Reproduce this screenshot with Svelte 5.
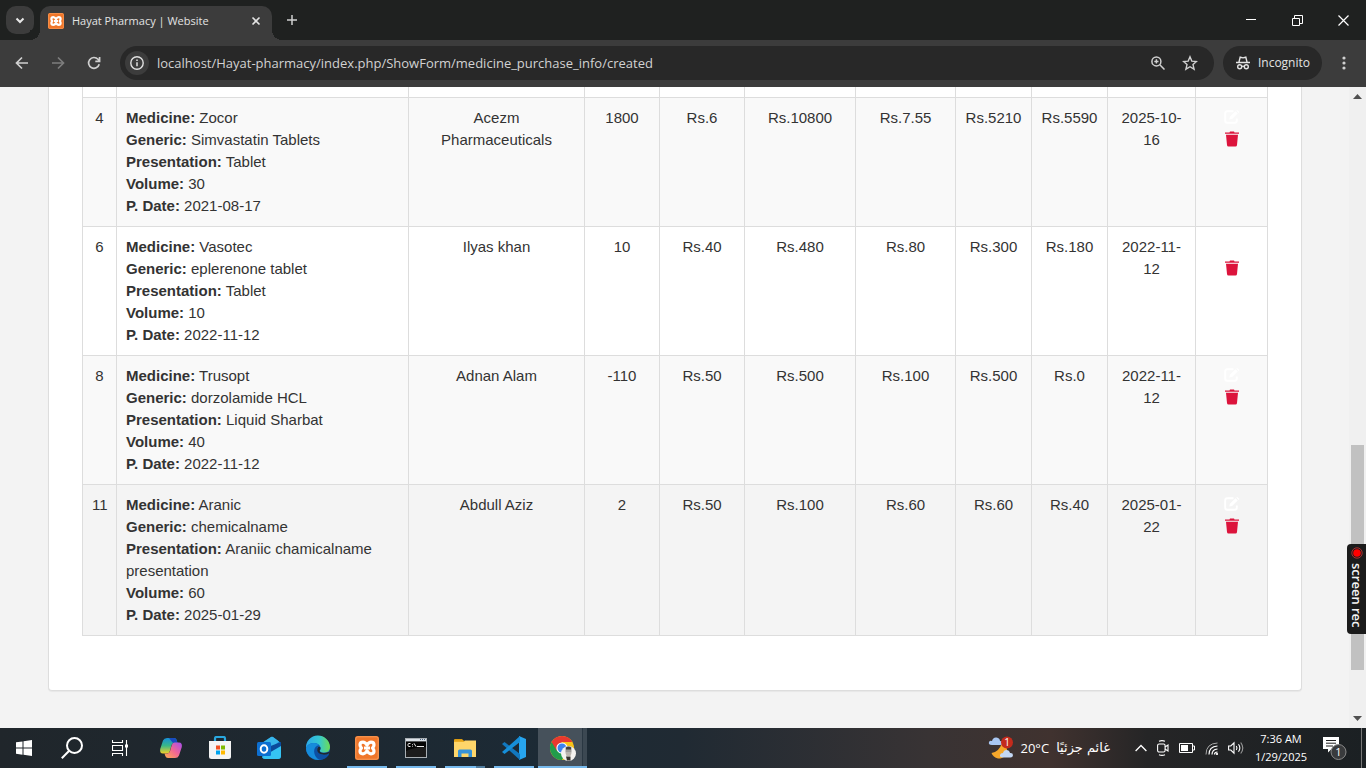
<script>
  const columns = [34, 0, 176, 75, 85, 111, 100, 76, 76, 88, 72];

  const rows = [
    { id: 4, name: 'Zocor', generic: 'Simvastatin Tablets', form: 'Tablet', volume: 30, bought: '2021-08-17', supplier: 'Acezm Pharmaceuticals', cells: ['1800', 'Rs.6', 'Rs.10800', 'Rs.7.55', 'Rs.5210', 'Rs.5590', '2025-10-16'], tone: 'odd' },
    { id: 6, name: 'Vasotec', generic: 'eplerenone tablet', form: 'Tablet', volume: 10, bought: '2022-11-12', supplier: 'Ilyas khan', cells: ['10', 'Rs.40', 'Rs.480', 'Rs.80', 'Rs.300', 'Rs.180', '2022-11-12'], tone: 'even' },
    { id: 8, name: 'Trusopt', generic: 'dorzolamide HCL', form: 'Liquid Sharbat', volume: 40, bought: '2022-11-12', supplier: 'Adnan Alam', cells: ['-110', 'Rs.50', 'Rs.500', 'Rs.100', 'Rs.500', 'Rs.0', '2022-11-12'], tone: 'odd' },
    { id: 11, name: 'Aranic', generic: 'chemicalname', form: 'Araniic chamicalname presentation', volume: 60, bought: '2025-01-29', supplier: 'Abdull Aziz', cells: ['2', 'Rs.50', 'Rs.100', 'Rs.60', 'Rs.60', 'Rs.40', '2025-01-22'], tone: 'active' }
  ];
</script>

{#snippet xampp(size)}
  <svg width={size} height={size} viewBox="0 0 24 24" aria-hidden="true">
    <rect width="24" height="24" rx="2.5" fill="#f0762a" />
    <rect x=".8" y=".8" width="22.4" height="22.4" rx="2" fill="none" stroke="#f9a566" stroke-width=".8" />
    <path d="M12 9.200C10.800 7.200 9.800 6.200 8 6.200 6 6.200 5 7.400 5 9c0 1.300.7 2 1.500 3C5.700 13 5 13.700 5 15c0 1.600 1 2.800 3 2.800 1.800 0 2.800-1 4-3 1.200 2 2.200 3 4 3 2 0 3-1.200 3-2.800 0-1.300-.7-2-1.500-3 .8-1 1.500-1.700 1.500-3 0-1.600-1-2.800-3-2.800-1.800 0-2.800 1-4 3z" fill="none" stroke="#fff" stroke-width="3.200" stroke-linejoin="round" />
    <path d="M9 12h6" stroke="#fff" stroke-width="3" />
  </svg>
{/snippet}

<div class="screen">
  <header class="tabs">
    <button class="tabsearch" aria-label="Search tabs">
      <svg width="10" height="7" viewBox="0 0 10 7"><path d="M1.500 1.500 5 5l3.500-3.500" fill="none" stroke="#e8e8e8" stroke-width="2" /></svg>
    </button>
    <div class="tab">
      {@render xampp(16)}
      <span class="title">Hayat Pharmacy | Website</span>
      <button class="plain" aria-label="Close tab">
        <svg width="10" height="10" viewBox="0 0 10 10"><path d="m1.500 1.500 7 7m0-7-7 7" stroke="#e3e3e3" stroke-width="1.600" /></svg>
      </button>
    </div>
    <button class="plain newtab" aria-label="New tab">
      <svg width="12" height="12" viewBox="0 0 12 12"><path d="M6 1v10M1 6h10" stroke="#d0d0d0" stroke-width="1.500" /></svg>
    </button>
    <div class="window">
      <button class="plain" aria-label="Minimize"><svg width="10" height="10"><path d="M0 4.500h10" stroke="#fff" /></svg></button>
      <button class="plain" aria-label="Restore"><svg width="11" height="11"><path d="M.5 3.500h7v7h-7zM2.500 3V.5h8v8H8" fill="none" stroke="#fff" /></svg></button>
      <button class="plain" aria-label="Close"><svg width="11" height="11"><path d="m.5.5 10 10m0-10-10 10" stroke="#fff" stroke-width="1.200" /></svg></button>
    </div>
  </header>

  <nav class="toolbar">
    <button class="plain" aria-label="Back"><svg width="14" height="14" viewBox="0 0 14 14"><path d="M13 7H2M7 1.500 1.500 7 7 12.500" fill="none" stroke="#d0d0d0" stroke-width="1.700" /></svg></button>
    <button class="plain" aria-label="Forward"><svg width="14" height="14" viewBox="0 0 14 14"><path d="M1 7h11M7 1.500 12.500 7 7 12.500" fill="none" stroke="#7d7d7d" stroke-width="1.700" /></svg></button>
    <button class="plain" aria-label="Reload"><svg width="14" height="14" viewBox="0 0 14 14"><path d="M12.200 8.300A5.400 5.400 0 1 1 11 3.300l1.500 1.600M12.600 1v4.300H8.300" fill="none" stroke="#d0d0d0" stroke-width="1.700" /></svg></button>
    <div class="address">
      <button class="plain info" aria-label="Site information"><svg width="14" height="14" viewBox="0 0 14 14"><circle cx="7" cy="7" r="6.200" fill="none" stroke="#e0e0e0" stroke-width="1.400" /><path d="M7 6.300v4M7 3.500V5" stroke="#e0e0e0" stroke-width="1.500" /></svg></button>
      <input aria-label="Address" value="localhost/Hayat-pharmacy/index.php/ShowForm/medicine_purchase_info/created" />
      <button class="plain" aria-label="Zoom"><svg width="14" height="14" viewBox="0 0 14 14"><circle cx="5.400" cy="5.400" r="4.500" fill="none" stroke="#d0d0d0" stroke-width="1.500" /><path d="m8.800 8.800 4.700 4.700M5.400 3.300v4.200M3.300 5.400h4.200" stroke="#d0d0d0" stroke-width="1.500" /></svg></button>
      <button class="plain" aria-label="Bookmark"><svg width="16" height="16" viewBox="0 0 16 16"><path d="m8 1.800 1.800 4.300 4.700.4L11 9.600l1.100 4.600L8 11.700l-4.100 2.500L5 9.600 1.500 6.500l4.700-.4z" fill="none" stroke="#d0d0d0" stroke-width="1.400" /></svg></button>
    </div>
    <div class="incognito">
      <svg width="14" height="14" viewBox="0 0 14 14" fill="none" stroke="#e3e3e3" stroke-width="1.400"><path d="M0 6.500h14M3 6 4.200 1.200l2.800.7 2.800-.7L11 6" /><circle cx="3.700" cy="10.800" r="2" /><circle cx="10.300" cy="10.800" r="2" /><path d="M5.700 10.500q1.300-.8 2.600 0" /></svg>
      <span>Incognito</span>
    </div>
    <button class="plain dots" aria-label="Menu"><svg width="4" height="14" viewBox="0 0 4 14" fill="#d0d0d0"><circle cx="2" cy="2" r="1.600" /><circle cx="2" cy="7" r="1.600" /><circle cx="2" cy="12" r="1.600" /></svg></button>
  </nav>

  <div class="view">
    <main>
      <section class="panel">
        <table>
          <colgroup>
            {#each columns as width}
              <col style:width={width ? `${width}px` : 'auto'} />
            {/each}
          </colgroup>
          <tbody>
            <tr class="cut">
              {#each columns as _}<td></td>{/each}
            </tr>
            {#each rows as row}
              <tr class={row.tone}>
                <td>{row.id}</td>
                <td class="details">
                  <b>Medicine:</b> {row.name}<br />
                  <b>Generic:</b> {row.generic}<br />
                  <b>Presentation:</b> {row.form}<br />
                  <b>Volume:</b> {row.volume}<br />
                  <b>P. Date:</b> {row.bought}
                </td>
                <td>{row.supplier}</td>
                {#each row.cells as cell}<td>{cell}</td>{/each}
                <td>
                  <a href="#edit-{row.id}" aria-label="Edit"><svg width="16" height="14" viewBox="0 0 16 14"><path d="M9.500 1.200H3.200Q1.200 1.200 1.200 3.200v7.600q0 2 2 2h7.600q2 0 2-2V8.500" fill="none" stroke="#fff" stroke-width="1.900" /><path d="m5.300 9.400.6-2.600 5.600-5.500 2.200 2.200-5.600 5.500zM12.300.6l.8-.6L15.500 2l-.9.900z" fill="#fff" /></svg></a>
                  <a href="#delete-{row.id}" aria-label="Delete"><svg width="14" height="16" viewBox="0 0 14 16" fill="#dc143c"><path d="M4.500 1.500 5 .5h4l.5 1H14v1.300H0V1.500zM1 3.800h12L12 14q-.1 1.500-1.500 1.500h-7Q2.100 15.500 2 14z" /></svg></a>
                </td>
              </tr>
            {/each}
          </tbody>
        </table>
      </section>
    </main>
    <div class="scroll">
      <svg width="9" height="5"><path d="M0 5 4.500 0 9 5z" fill="#505050" /></svg>
      <div class="track"><div class="thumb"></div></div>
      <svg width="9" height="5"><path d="m0 0 4.500 5L9 0z" fill="#505050" /></svg>
    </div>
    <div class="recorder">
      <svg width="12" height="12" viewBox="0 0 12 12"><circle cx="6" cy="6" r="5.200" fill="none" stroke="#c33" stroke-width=".8" /><circle cx="6" cy="6" r="3.800" fill="#f00" /></svg>
      <span>screen rec</span>
    </div>
  </div>

  <footer class="taskbar">
    <button aria-label="Start"><svg width="16" height="16" viewBox="0 0 16 16" fill="#fff"><path d="M0 2.300 6.500 1.400v6.200H0zM7.500 1.200 16 0v7.600H7.500zM0 8.500h6.500v6.200L0 13.800zM7.500 8.500H16V16l-8.500-1.200z" /></svg></button>
    <button aria-label="Search"><svg width="22" height="22" viewBox="0 0 22 22" fill="none" stroke="#fff" stroke-width="2"><circle cx="13.500" cy="8.500" r="7.500" /><path d="m8.200 13.800-7.400 7.400" /></svg></button>
    <button aria-label="Task view"><svg width="16" height="16" viewBox="0 0 16 16"><path d="M.5 0v2.500h10V0M.5 5.500h10v5H.5zM.5 16v-2.500h10V16M14.500 0v16" fill="none" stroke="#fff" stroke-width="1.100" /><path d="M13 4.500h3v3h-3z" fill="#fff" /></svg></button>
    <div class="apps">
      <button aria-label="Copilot"><svg width="24" height="24" viewBox="0 0 24 24">
        <defs>
          <linearGradient id="cpa" x1="0" y1="0" x2="0" y2="1"><stop offset="0" stop-color="#168fd8" /><stop offset=".5" stop-color="#39b886" /><stop offset="1" stop-color="#f3d128" /></linearGradient>
          <linearGradient id="cpb" x1="1" y1="0" x2="0" y2="1"><stop offset="0" stop-color="#a64df0" /><stop offset=".5" stop-color="#f26693" /><stop offset="1" stop-color="#ffb04c" /></linearGradient>
        </defs>
        <path d="M8 2h7q2 0 2.700 2l.8 3h-3.200q-2 0-2.700 2l-1.900 6.500Q10 17.500 8 17.500H4Q.5 17.500 1.200 13L4 4.500Q5 2 8 2z" fill="url(#cpa)" />
        <path d="M10 2h5q2 0 2.700 2l.8 3h-3q-2 0-2.800-1.600z" fill="#184bc0" />
        <path d="M16 22H9q-2 0-2.700-2l-.8-2.500h2.700q2 0 2.700-2L12.800 9q.7-2.500 2.700-2.500h4.500q3.500 0 2.800 4.500L20 19.500Q19 22 16 22z" fill="url(#cpb)" />
      </svg></button>
      <button aria-label="Store"><svg width="24" height="24" viewBox="0 0 24 24">
        <path d="M7 6V2.500Q7 1 8.500 1h7Q17 1 17 2.500V6" fill="none" stroke="#29a8e0" stroke-width="2.200" /><path d="M1 5h22v15.500Q23 23 20.500 23h-17Q1 23 1 20.500z" fill="#f4f4f4" />
        <path d="M8 9.500h4v4H8z" fill="#f25022" /><path d="M13 9.500h4v4h-4z" fill="#7fba00" /><path d="M8 14.500h4v4H8z" fill="#00a4ef" /><path d="M13 14.500h4v4h-4z" fill="#ffb900" />
      </svg></button>
      <button aria-label="Outlook"><svg width="26" height="24" viewBox="0 0 26 24">
        <path d="M6 7 15 1q1-.6 2 0l8 6v13q0 3-3 3H9q-3 0-3-3z" fill="#1685d2" /><path d="m6 7 9-6q1-.6 2 0l6 4.500L12 15z" fill="#38b6eb" /><path d="m12 11 13-5v5l-12 9z" fill="#0b4a9b" /><path d="M25 10v10q0 3-3 3H9q-2 0-3-2z" fill="#35c3f3" />
        <rect x="1" y="6" width="14" height="14" rx="1.500" fill="#0d6fd1" /><ellipse cx="8" cy="13" rx="3.300" ry="3.700" fill="none" stroke="#fff" stroke-width="2" />
      </svg></button>
      <button aria-label="Edge"><svg width="26" height="26" viewBox="0 0 26 26">
        <defs><linearGradient id="eda" x1="0" x2="1"><stop offset="0" stop-color="#2ca9e9" /><stop offset=".55" stop-color="#35c8d2" /><stop offset="1" stop-color="#6ddc54" /></linearGradient></defs>
        <circle cx="13" cy="13" r="12" fill="#1268bd" /><path d="M1 13a12 12 0 0 1 24-1q0 5.500-6 5.500-4 0-4.300-1.800.9-1 .9-3Q14.500 8 9 8 3 8 1 13z" fill="url(#eda)" /><path d="M1 13q2.500-5 8-5 3 0 4.700 2-4.400 1-4.400 6 .5 6 7 9-6 .5-10.300-2.500Q1 19 1 13z" fill="#168cdb" />
        <path d="M14.500 10.500q-3 1.500-2.300 4.500 1.600 5.200 8 5 2-.2 3.500-1.300.7.500-.5 2-3.700 4.600-9 4-4.900-2.500-5-8.500.3-5 5.300-5.700z" fill="#0d50a3" /><path d="M15.600 13q-.3 2-1 2.700.9 2.800 6.300 2.100l3.700-1-1 1.700q-1.700 1.300-4.700 1.200-5.800-.5-6.700-4.200-.3-2.500 1.500-4 1.700.3 1.900 1.500z" fill="#202831" />
      </svg></button>
      <button class="open" aria-label="XAMPP">{@render xampp(24)}</button>
      <button class="open" aria-label="Command Prompt"><svg width="22" height="20" viewBox="0 0 22 20"><rect width="22" height="20" fill="#a9afb4" /><path d="M1 3.500h20V19H1z" fill="#050505" /><path d="M1 1h20v2H1z" fill="#dce2e8" /><path d="M15 1.500h1m1 0h1m1 0h1" stroke="#4f6680" /><path d="M5.500 5.500H4q-1 0-1 1v1q0 1 1 1h1.500M7.500 6v.8m0 1v.8M9 5.300l2 3.300M12 8.500h7" fill="none" stroke="#e8e8e8" stroke-width="1" /><path d="m1 19 0-6Q10 9 21 9v10z" fill="#333" opacity=".5" /></svg></button>
      <button class="open grouped" aria-label="File Explorer"><svg width="22" height="20" viewBox="0 0 22 20"><path d="M0 2Q0 1 1 1h7l2 2H0z" fill="#dc9b10" /><path d="M0 3.500h9l2-1h11V19H0z" fill="#ffd66a" /><path d="M0 2.500h9L11 4H0z" fill="#edae24" /><path d="M4 19v-6q0-1.500 1.500-1.500h11Q18 11.500 18 13v6h-3.500v-3.500h-7V19z" fill="#3793d8" /></svg></button>
      <button class="open" aria-label="Visual Studio Code"><svg width="24" height="24" viewBox="0 0 24 24"><path d="M17 0 24 3v18l-7 3z" fill="#27a5ef" /><path d="m0 8 2.500-2L18 18v6z" fill="#1277bd" /><path d="m0 16 2.500 2L18 6V0z" fill="#168fd9" /></svg></button>
      <button class="open current" aria-label="Chrome"><svg width="28" height="26" viewBox="0 0 28 26">
        <circle cx="13" cy="13" r="12" fill="#fbc318" /><path d="M2.600 7A12 12 0 0 0 13 25l5-9-5-3z" fill="#219c4b" /><path d="M2.600 7 8 16l5-9h10.400A12 12 0 0 0 2.600 7z" fill="#e8382f" /><circle cx="13" cy="13" r="5.600" fill="#fff" /><circle cx="13" cy="13" r="4.500" fill="#3d82ee" />
        <circle cx="19.500" cy="18.500" r="7.500" fill="#f4f2ef" /><path d="M16.500 11.700h6v6h-6z" fill="#9c9a97" /><path d="M17 12.500q2.500-2 5 0v2h-5z" fill="#443f3c" /><path d="M16.500 18h6l-1 3h-4z" fill="#bbb6ad" /><path d="M17 21.500h4.500v4H18z" fill="#37332f" />
      </svg></button>
    </div>
    <div class="tray">
      <button class="weather">
        <svg width="26" height="24" viewBox="0 0 26 24">
          <path d="M14 7a8 8 0 1 1-10.500 10Q11 16 14 7z" fill="#f6a72b" /><path d="M4 9Q0 9 1 6q1-2 3-1 1-4 4.500-3.500T12 5q3 0 2.500 2.500Q14 9 12 9z" fill="#a9c7f2" /><path d="M15 21.500q-3.500 0-3-2.500.5-2 3-2 .7-3 3.500-3t3.500 3q3-.3 3 2.300-.2 2.200-2.500 2.200z" fill="#c4d8f5" />
          <circle cx="19" cy="6.500" r="6" fill="#c42b1c" /><text x="19" y="10" text-anchor="middle" fill="#fff" font-size="10">1</text>
        </svg>
        <span>20°C</span><span dir="rtl" lang="ar" class="arabic">غائم جزئيًا</span>
      </button>
      <div class="status">
        <svg width="12" height="8" viewBox="0 0 12 8"><path d="m.6 7 5.400-5.500L11.400 7" fill="none" stroke="#fff" stroke-width="1.300" /></svg>
        <svg width="12" height="16" viewBox="0 0 12 16" fill="none" stroke="#fff" stroke-width="1.100"><rect x=".6" y="4" width="7.500" height="8" rx="1.500" /><path d="m8 7 3-2v6L8 9M2 1.200q3-1.200 6 0M2 14.800q3 1.200 6 0" /></svg>
        <svg width="16" height="10" viewBox="0 0 16 10"><path d="M.5.5h13v9H.5zM14 3h1.500v4H14" fill="none" stroke="#fff" /><path d="M2 2h7v6H2z" fill="#fff" /></svg>
        <svg width="13" height="13" viewBox="0 0 13 13" fill="none" stroke="#fff"><path d="M1 12.500Q1 1.500 12.500 1" stroke="#aaa" /><path d="M4 12.500Q4 4.500 12.500 4M7 12.500Q7 7.500 12.500 7M9.500 12.500q0-2.500 3-2.500" stroke-width="1.200" /><circle cx="12" cy="12" r=".8" fill="#fff" /></svg>
        <svg width="16" height="14" viewBox="0 0 16 14" fill="none" stroke="#fff" stroke-width="1.100"><path d="M.6 5h2.200L6 1.800v10.400L2.800 9H.6zM8.300 5q1.400 2 0 4M10.500 3.300q2.700 3.700 0 7.400" /><path d="M12.700 1.500q4.200 5.500 0 11" stroke="#999" /></svg>
      </div>
      <time><span>7:36 AM</span><span>1/29/2025</span></time>
      <button class="note" aria-label="Notifications">
        <svg width="26" height="24" viewBox="0 0 26 24"><path d="M1 1h16v12H9.500L6 16.500V13H1z" fill="#fff" /><path d="M4 4.500h10M4 7.200h10M4 10h7" stroke="#222" /><circle cx="16.500" cy="16" r="7.500" fill="#393b3d" stroke="#8a8a8a" /><text x="16.500" y="20" text-anchor="middle" fill="#fff" font-size="11">1</text></svg>
      </button>
      <button class="desktop" aria-label="Show desktop"></button>
    </div>
  </footer>
</div>

<style>
  :global(body) { margin: 0; }
  * { box-sizing: border-box; }
  svg { display: block; flex: none; }
  button, input { font: inherit; color: inherit; border: 0; background: none; padding: 0; }
  .screen { display: flex; flex-direction: column; min-height: 100vh; font: 12px/16px "Open Sans", "Noto Sans", sans-serif; color: #e3e3e3; }
  .plain { display: grid; place-items: center; flex: none; }

  .tabs { display: flex; height: 40px; background: #1f2120; padding-left: 6px; }
  .tabsearch { display: grid; place-items: center; width: 28px; height: 28px; margin: 6px 6px 0 0; border-radius: 10px; background: #3c3c3c; }
  .tab { position: relative; display: flex; align-items: center; gap: 8px; width: 232px; height: 34px; margin-top: 6px; padding: 0 11px 5px 8px; border-radius: 10px 10px 0 0; background: #3c3c3c; }
  .tab::before, .tab::after { content: ""; position: absolute; bottom: 0; width: 10px; height: 10px; }
  .tab::before { left: -10px; background: radial-gradient(circle at 0 0, #1f2120 10px, #3c3c3c 10px); }
  .tab::after { right: -10px; background: radial-gradient(circle at 100% 0, #1f2120 10px, #3c3c3c 10px); }
  .title { flex: 1; white-space: nowrap; font-size: 11px; }
  .newtab { width: 40px; }
  .window { display: flex; margin-left: auto; }
  .window button { width: 46px; height: 40px; }

  .toolbar { display: flex; align-items: center; height: 47px; padding: 0 6px 1px 4px; background: #3c3c3c; }
  .toolbar > .plain { width: 36px; height: 34px; }
  .toolbar > .dots { width: 32px; margin-left: 6px; }
  .address { display: flex; flex: 1; align-items: center; height: 34px; margin: 0 9px 0 8px; padding: 0 16px 0 5px; border-radius: 17px; background: #282828; gap: 17px; font-size: 13px; }
  .info { width: 24px; height: 24px; margin-right: -9px; border-radius: 50%; background: #3c3c3c; }
  .address input { flex: 1; min-width: 0; height: 24px; outline: 0; color: #d2d2d2; }
  .incognito { display: flex; align-items: center; gap: 8px; height: 34px; padding: 0 12px 0 13px; border-radius: 17px; background: #282828; }

  .view { position: relative; display: grid; grid-template-columns: 1fr 17px; flex: 1; background: #f3f3f3; }
  main { padding: 0 47px 37px 48px; min-width: 0; }
  .panel { padding: 0 33px 54px; border: 1px solid #ddd; border-top: 0; border-radius: 0 0 4px 4px; background: #fff; box-shadow: 0 1px 1px #0000000d; }
  table { width: 100%; table-layout: fixed; border-collapse: collapse; font: 15px/22px "Liberation Sans", Arial, sans-serif; color: #333; }
  td { padding: 9px; border: 1px solid #ddd; text-align: center; vertical-align: top; }
  .cut td { height: 10px; padding: 0; border-top: 0; }
  .details { text-align: left; }
  .odd { background: #f9f9f9; }
  .active { background: #f4f4f4; }
  td a { display: grid; place-items: center; height: 22px; padding-bottom: 2px; }

  .scroll { display: flex; flex-direction: column; align-items: center; padding: 7px 0; background: #f0f0f0; }
  .track { flex: 1; display: flex; flex-direction: column; width: 13px; padding: 346px 0 46px; }
  .thumb { flex: 1; background: #c1c1c1; }
  .recorder { position: absolute; right: 0; bottom: 94px; display: flex; flex-direction: column; align-items: center; gap: 4px; width: 19px; height: 90px; padding-top: 3px; border-radius: 4px 0 0 4px; background: #1b1b1b; color: #f4f4f4; font-size: 13px; font-weight: 600; line-height: 19px; }
  .recorder span { writing-mode: vertical-rl; white-space: nowrap; }

  .taskbar { display: flex; height: 40px; background: linear-gradient(90deg, #20262b, #1c2a35 40%, #202a33 50%, #383334 68%, #40322f 77%, #252526 84%, #1b2023); color: #fff; }
  .taskbar button { display: grid; place-items: center; width: 48px; height: 40px; }
  .apps { display: flex; margin-left: 2px; }
  .taskbar .apps button { width: 49px; }
  .taskbar .open { background: linear-gradient(#76b9ed, #76b9ed) center bottom / 40px 2px no-repeat; }
  .taskbar .grouped { background-image: linear-gradient(90deg, #76b9ed 31px, #507c9e 31px); }
  .taskbar .current { background: linear-gradient(#76b9ed, #76b9ed) center bottom / 100% 2px no-repeat, linear-gradient(90deg, #46515b 44px, #2a3742 44px 45px, #3c4852 45px); }
  .tray { display: flex; align-items: center; margin-left: auto; }
  .taskbar .weather { display: flex; align-items: center; gap: 7px; width: auto; margin-right: 25px; font-size: 13px; }
  .arabic { font-family: "DejaVu Sans", sans-serif; font-size: 13px; }
  .status { display: flex; align-items: center; gap: 10px; margin-right: 10px; }
  time { display: flex; flex-direction: column; align-items: center; width: 54px; font-size: 11px; line-height: 18px; }
  .taskbar .note { width: 53px; }
  .taskbar .desktop { width: 5px; border-left: 1px solid #777; }
</style>
